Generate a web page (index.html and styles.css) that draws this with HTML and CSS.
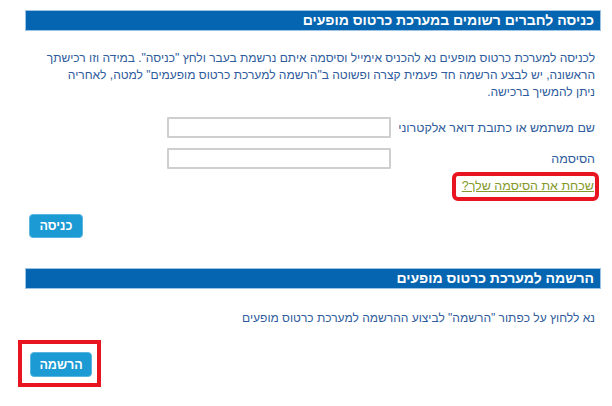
FILE: index.html
```html
<!DOCTYPE html>
<html lang="he" dir="rtl">
<head>
<meta charset="utf-8">
<link rel="stylesheet" href="styles.css">
</head>
<body>
<div class="page">
  <div class="bar">כניסה לחברים רשומים במערכת כרטוס מופעים</div>
  <p class="intro">לכניסה למערכת כרטוס מופעים נא להכניס אימייל וסיסמה איתם נרשמת בעבר ולחץ "כניסה". במידה וזו רכישתך הראשונה, יש לבצע הרשמה חד פעמית קצרה ופשוטה ב"הרשמה למערכת כרטוס מופעמים" למטה, לאחריה<br>ניתן להמשיך ברכישה.</p>
  <div class="form">
    <div class="row">
      <label class="label">שם משתמש או כתובת דואר אלקטרוני</label>
      <input class="field" type="text">
    </div>
    <div class="row">
      <label class="label">הסיסמה</label>
      <input class="field" type="password">
    </div>
    <div class="forgot-box"><a class="forgot" href="#">שכחת את הסיסמה שלך?</a></div>
    <button class="btn btn-login">כניסה</button>
  </div>
  <div class="bar bar-second">הרשמה למערכת כרטוס מופעים</div>
  <p class="note">נא ללחוץ על כפתור "הרשמה" לביצוע ההרשמה למערכת כרטוס מופעים</p>
  <div class="register-box"><button class="btn btn-register">הרשמה</button></div>
</div>
</body>
</html>
```
FILE: styles.css
```css
html, body {
  margin: 0;
  padding: 0;
  background: #ffffff;
}
body {
  font-family: "Liberation Sans", Arial, sans-serif;
  font-size: 12px;
  color: #2f5c9c;
}
.page {
  display: flex;
  flex-direction: column;
  padding: 10px 11px 0 25px;
}
.bar {
  height: 19px;
  line-height: 19px;
  background: #0565b0;
  border: 1px solid #9cc2e4;
  color: #ffffff;
  font-weight: bold;
  font-size: 14px;
  padding-right: 6px;
}
.intro {
  margin: 19px 6px 0 0;
  line-height: 17px;
}
.form {
  display: flex;
  flex-direction: column;
  margin-top: 16px;
}
.row {
  display: flex;
  align-items: center;
  gap: 4px;
  padding-right: 6px;
  margin-bottom: 10px;
}
.label {
  width: 200px;
  font-size: 12.5px;
}
.field {
  width: 224px;
  height: 21px;
  box-sizing: border-box;
  border: 2px solid #cfcfcf;
  border-radius: 1px;
  margin: 0;
  padding: 0;
  background: #fff;
}
.row + .row {
  margin-bottom: 3px;
}
.forgot-box {
  align-self: flex-start;
  margin-right: 2px;
  border: 4px solid #e8141f;
  border-radius: 6px;
  padding: 2px 1px 3px 6px;
  line-height: 16px;
}
.forgot {
  color: #84992a;
  font-size: 12.5px;
  text-decoration: underline;
}
.btn {
  background: #1b9ad3;
  color: #ffffff;
  border: 1px solid #58b6e0;
  border-radius: 4px;
  font-family: "Liberation Sans", Arial, sans-serif;
  font-weight: bold;
  font-size: 12.5px;
  height: 24px;
  padding: 0;
  margin: 0;
}
.btn-login {
  align-self: flex-end;
  width: 54px;
  margin: 13px 0 0 4px;
}
.bar-second {
  margin-top: 30px;
}
.note {
  margin: 21px 6px 0 0;
  line-height: 17px;
}
.register-box {
  align-self: flex-end;
  margin: 13px 0 0 -7px;
  border: 4px solid #e8141f;
  padding: 8px 5px 6px 8px;
  display: flex;
}
.btn-register {
  width: 62px;
  height: 25px;
}
```
